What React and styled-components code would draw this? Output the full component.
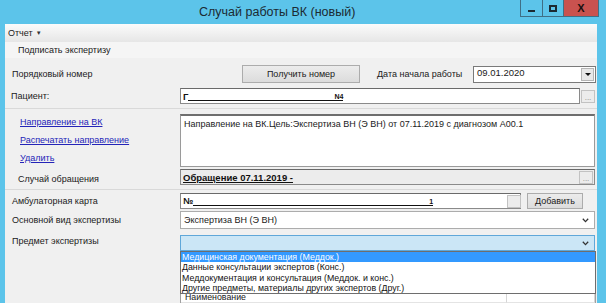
import React from "react";
import styled, { createGlobalStyle } from "styled-components";

const Global = createGlobalStyle`
  html, body { margin: 0; padding: 0; background: #5cc4ea; }
  body { font-family: "Liberation Sans", Arial, sans-serif; }
  * { box-sizing: border-box; }
`;

const FS = 9;

const Window = styled.div`
  width: 606px;
  height: 303px;
  overflow: hidden;
  background: #5cc4ea;
  display: flex;
  flex-direction: column;
`;

const TitleBar = styled.div`
  height: 24px;
  flex: none;
  display: flex;
  align-items: flex-start;
`;

const Title = styled.div`
  flex: 1;
  padding-left: 199px;
  padding-top: 5px;
  font-size: 12.5px;
  color: #1b2a33;
  white-space: nowrap;
`;

const Controls = styled.div`
  display: flex;
  margin-right: 7px;
  height: 17px;
`;

const CtlBtn = styled.div`
  width: ${(p) => p.$w}px;
  height: 17px;
  background: ${(p) => (p.$close ? "#c9524f" : "#5cc4ea")};
  border: 1px solid #3f6f86;
  border-top: none;
  margin-left: -1px;
  display: flex;
  align-items: center;
  justify-content: center;
  color: #1a1010;
  font-size: 11px;
  font-weight: bold;
`;

const MinGlyph = styled.div`
  width: 7px;
  height: 2px;
  background: #1c2a33;
  margin-top: 5px;
`;

const MaxGlyph = styled.div`
  width: 8px;
  height: 7px;
  border: 2px solid #1c2a33;
`;

const Body = styled.div`
  flex: 1;
  margin: 0 9px 0 5px;
  background: #f0f0f0;
  display: flex;
  flex-direction: column;
  font-size: ${FS}px;
  color: #1a1a1a;
`;

const MenuBar = styled.div`
  height: 18px;
  flex: none;
  background: linear-gradient(#fbfbfb, #e6e6e6);
  display: flex;
  align-items: center;
  padding-left: 3px;
  gap: 3px;
`;

const Caret = styled.span`
  font-size: 6px;
  color: #333;
`;

const ToolBar = styled.div`
  height: 16px;
  flex: none;
  background: #f5f5f5;
  display: flex;
  align-items: center;
  padding-left: 13px;
`;

const Form = styled.div`
  display: flex;
  flex-direction: column;
  flex: 1;
`;

const Row = styled.div`
  display: grid;
  grid-template-columns: 175px 416px;
  align-items: ${(p) => p.$align || "center"};
  height: ${(p) => p.$h}px;
  margin-top: ${(p) => p.$mt || 0}px;
  flex: none;
  position: relative;
  z-index: ${(p) => p.$z || 0};
`;

const Label = styled.div`
  padding-left: ${(p) => p.$indent || 7}px;
  white-space: nowrap;
  align-self: ${(p) => p.$self || "center"};
  padding-top: ${(p) => p.$pt || 0}px;
`;

const Links = styled.div`
  display: flex;
  flex-direction: column;
  padding-left: 15px;
  padding-top: 3px;
  gap: 8px;
  align-self: start;
`;

const Link = styled.a`
  color: #2424b8;
  text-decoration: underline;
  line-height: 10px;
  cursor: pointer;
`;

const Flex = styled.div`
  display: flex;
  align-items: center;
  height: 100%;
`;

const Button = styled.div`
  width: ${(p) => p.$w}px;
  height: ${(p) => p.$h || 18}px;
  margin-left: ${(p) => p.$ml || 0}px;
  background: linear-gradient(#ececec, #dcdcdc);
  border: 1px solid #acacac;
  display: flex;
  align-items: center;
  justify-content: center;
  flex: none;
`;

const DateLabel = styled.div`
  margin-left: 17px;
  width: 96px;
  white-space: nowrap;
`;

const DateBox = styled.div`
  width: 123px;
  height: 17px;
  background: #fff;
  border: 1px solid #7a7a7a;
  display: flex;
  justify-content: space-between;
  padding-left: 3px;
  font-size: 9.5px;
  line-height: 11px;
`;

const DropBtn = styled.div`
  width: 13px;
  height: 13px;
  margin: 1px;
  background: #e8e8e8;
  border: 1px solid #b5b5b5;
  display: flex;
  align-items: center;
  justify-content: center;
  align-self: center;
`;

const Tri = styled.div`
  width: 0;
  height: 0;
  border-left: 3px solid transparent;
  border-right: 3px solid transparent;
  border-top: 3px solid #111;
`;

const Input = styled.div`
  flex: ${(p) => (p.$w ? "none" : 1)};
  width: ${(p) => (p.$w ? p.$w + "px" : "auto")};
  height: 16px;
  background: ${(p) => (p.$disabled ? "#ececec" : "#fff")};
  border: 1px solid #8a8a8a;
  border-top-color: #6a6a6a;
  display: flex;
  align-items: center;
  padding-left: 2px;
  color: #111;
`;

const Ellipsis = styled.div`
  width: 14px;
  height: 13px;
  margin-left: ${(p) => p.$ml ?? 1}px;
  margin-right: ${(p) => p.$mr ?? 1}px;
  background: #ececec;
  border: 1px solid #c2c2c2;
  font-size: 8px;
  color: #888;
  display: flex;
  align-items: flex-end;
  justify-content: center;
  line-height: 8px;
  flex: none;
`;

const Redacted = styled.span`
  display: inline-flex;
  align-items: flex-end;
  justify-content: space-between;
  width: ${(p) => p.$w}px;
  border-bottom: 1px solid #111;
  height: 9px;
  font-weight: bold;
  font-size: 7px;
  line-height: 7px;
`;

const Bold = styled.span`
  font-weight: bold;
  text-decoration: ${(p) => (p.$u ? "underline" : "none")};
  font-size: ${(p) => p.$fs || FS + 0.5}px;
`;

const TextArea = styled.div`
  height: 53px;
  background: #fff;
  border: 1px solid #9a9a9a;
  border-top: 2px solid #6e6e6e;
  padding: 3px 3px;
  margin-right: 1px;
`;

const Separator = styled.div`
  height: 1px;
  background: #d9d9d9;
  margin-top: ${(p) => p.$mt}px;
  flex: none;
`;

const Combo = styled.div`
  height: ${(p) => p.$h}px;
  margin-right: 1px;
  background: ${(p) => (p.$focus ? "#cbe6f6" : "#fff")};
  border: 1px solid ${(p) => (p.$focus ? "#5fa7d9" : "#acacac")};
  display: flex;
  align-items: center;
  justify-content: space-between;
  padding: 0 5px 0 3px;
`;

const Chevron = () => (
  <svg width="7" height="5" viewBox="0 0 7 5">
    <path d="M0.8 0.8 L3.5 3.6 L6.2 0.8" fill="none" stroke="#333" strokeWidth="1.3" />
  </svg>
);

const ListBox = styled.div`
  position: absolute;
  left: 175px;
  top: 16px;
  width: 416px;
  background: #fff;
  border: 1px solid #6e6e6e;
  display: flex;
  flex-direction: column;
`;

const ListItem = styled.div`
  height: 10.25px;
  line-height: 10.25px;
  padding-left: 1px;
  font-size: 8.8px;
  white-space: nowrap;
  background: ${(p) => (p.$sel ? "#3399ff" : "#fff")};
  color: ${(p) => (p.$sel ? "#fff" : "#111")};
`;

const Grid = styled.div`
  margin-top: 37px;
  margin-right: 1px;
  margin-left: 175px;
  flex: 1;
  background: #fff;
  border: 1px solid #a0a0a0;
  display: grid;
  grid-template-columns: 326px 1fr;
  grid-template-rows: 14px 1fr;
`;

const HeaderCell = styled.div`
  font-size: 8.8px;
  padding-left: 4px;
  padding-top: 2px;
  line-height: 12px;
  border-right: 1px solid #d6d6d6;
  border-bottom: 1px solid #e4e4e4;
`;

export default function App() {
  return (
    <Window>
      <Global />
      <TitleBar>
        <Title>Случай работы ВК (новый)</Title>
        <Controls>
          <CtlBtn $w={23}><MinGlyph /></CtlBtn>
          <CtlBtn $w={22}><MaxGlyph /></CtlBtn>
          <CtlBtn $w={36} $close>X</CtlBtn>
        </Controls>
      </TitleBar>
      <Body>
        <MenuBar>
          Отчет <Caret>▼</Caret>
        </MenuBar>
        <ToolBar>Подписать экспертизу</ToolBar>
        <Form>
          <Row $h={18} $mt={7}>
            <Label>Порядковый номер</Label>
            <Flex>
              <Button $w={118} $ml={62}>Получить номер</Button>
              <DateLabel>Дата начала работы</DateLabel>
              <DateBox>
                <span>09.01.2020</span>
                <DropBtn><Tri /></DropBtn>
              </DateBox>
            </Flex>
          </Row>
          <Row $h={16} $mt={5}>
            <Label $indent={6}>Пациент:</Label>
            <Flex>
              <Input>
                <Bold>Г</Bold>
                <Redacted $w={155}>
                  <span />
                  <span>N4</span>
                </Redacted>
              </Input>
              <Ellipsis>...</Ellipsis>
            </Flex>
          </Row>
          <Separator $mt={4} />
          <Row $h={54} $mt={5} $align="start">
            <Links>
              <Link>Направление на ВК</Link>
              <Link>Распечатать направление</Link>
              <Link>Удалить</Link>
            </Links>
            <TextArea>
              Направление на ВК.Цель:Экспертиза ВН (Э ВН) от 07.11.2019 с диагнозом А00.1
            </TextArea>
          </Row>
          <Row $h={16} $mt={1}>
            <Label $indent={13} $pt={4}>Случай обращения</Label>
            <Flex>
              <Input $disabled>
                <Bold $u>Обращение 07.11.2019 -</Bold>
              </Input>
              <Ellipsis $ml={-16} $mr={3}>...</Ellipsis>
            </Flex>
          </Row>
          <Separator $mt={4} />
          <Row $h={16} $mt={3}>
            <Label>Амбулаторная карта</Label>
            <Flex>
              <Input $w={341}>
                <Bold $fs={9}>№</Bold>
                <Redacted $w={240}>
                  <span />
                  <span>1</span>
                </Redacted>
              </Input>
              <Ellipsis $ml={-14} $mr={6}>&nbsp;</Ellipsis>
              <Button $w={56} $h={16}>Добавить</Button>
            </Flex>
          </Row>
          <Row $h={18} $mt={2}>
            <Label>Основной вид экспертизы</Label>
            <Combo $h={18}>
              <span>Экспертиза ВН (Э ВН)</span>
              <Chevron />
            </Combo>
          </Row>
          <Row $h={16} $mt={6} $align="start" $z={2}>
            <Label $self="start" $pt={1}>Предмет экспертизы</Label>
            <Combo $h={16} $focus>
              <span />
              <Chevron />
            </Combo>
            <ListBox>
              <ListItem $sel>Медицинская документация (Меддок.)</ListItem>
              <ListItem>Данные консультации экспертов (Конс.)</ListItem>
              <ListItem>Меддокументация и консультация (Меддок. и конс.)</ListItem>
              <ListItem>Другие предметы, материалы других экспертов (Друг.)</ListItem>
            </ListBox>
          </Row>
          <Grid>
            <HeaderCell>Наименование</HeaderCell>
            <HeaderCell />
          </Grid>
        </Form>
      </Body>
    </Window>
  );
}
